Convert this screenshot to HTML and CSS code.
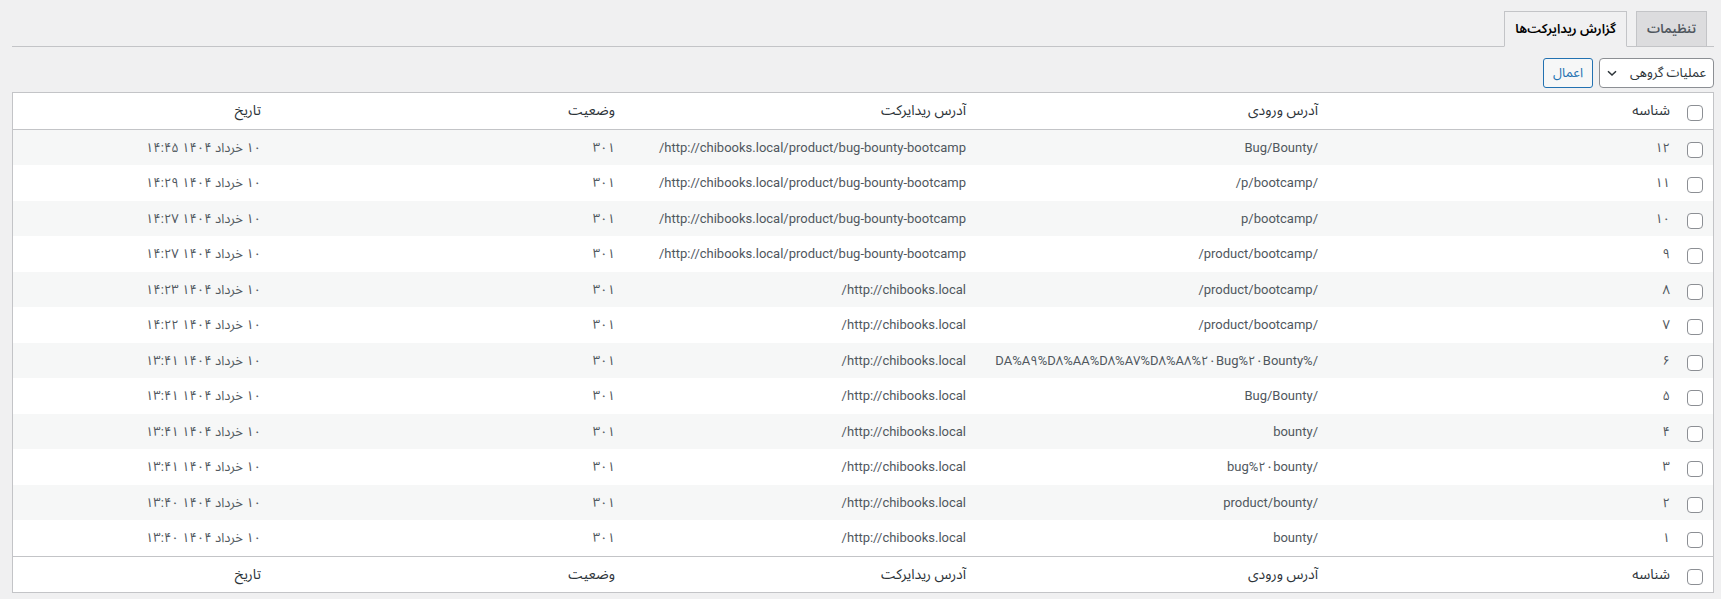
FILE: index.html
```html
<!DOCTYPE html>
<html lang="fa" dir="rtl">
<head>
<meta charset="utf-8">
<title>گزارش ریدایرکت‌ها</title>
<link rel="stylesheet" href="styles.css">
</head>
<body>
<div class="wrap">
  <nav class="tabs">
    <a class="tab">تنظیمات</a>
    <a class="tab tab-active">گزارش ریدایرکت‌ها</a>
  </nav>
  <div class="tablenav">
    <div class="select">
      <span>عملیات گروهی</span>
      <svg class="chev" width="12" height="12" viewBox="0 0 12 12"><path d="M2 4.2 L6 8 L10 4.2" fill="none" stroke="#2c3338" stroke-width="1.5"/></svg>
    </div>
    <button class="btn">اعمال</button>
  </div>
  <table class="list">
    <thead>
      <tr>
        <th class="c-check"><input type="checkbox"></th>
        <th class="c-id">شناسه</th>
        <th class="c-from">آدرس ورودی</th>
        <th class="c-to">آدرس ریدایرکت</th>
        <th class="c-status">وضعیت</th>
        <th class="c-date">تاریخ</th>
      </tr>
    </thead>
    <tbody>
      <tr class="alt"><td class="c-check"><input type="checkbox"></td><td>۱۲</td><td>/Bug/Bounty</td><td>http://chibooks.local/product/bug-bounty-bootcamp/</td><td>۳۰۱</td><td>۱۰ خرداد ۱۴۰۴ ۱۴:۴۵</td></tr>
      <tr><td class="c-check"><input type="checkbox"></td><td>۱۱</td><td>/p/bootcamp/</td><td>http://chibooks.local/product/bug-bounty-bootcamp/</td><td>۳۰۱</td><td>۱۰ خرداد ۱۴۰۴ ۱۴:۲۹</td></tr>
      <tr class="alt"><td class="c-check"><input type="checkbox"></td><td>۱۰</td><td>/p/bootcamp</td><td>http://chibooks.local/product/bug-bounty-bootcamp/</td><td>۳۰۱</td><td>۱۰ خرداد ۱۴۰۴ ۱۴:۲۷</td></tr>
      <tr><td class="c-check"><input type="checkbox"></td><td>۹</td><td>/product/bootcamp/</td><td>http://chibooks.local/product/bug-bounty-bootcamp/</td><td>۳۰۱</td><td>۱۰ خرداد ۱۴۰۴ ۱۴:۲۷</td></tr>
      <tr class="alt"><td class="c-check"><input type="checkbox"></td><td>۸</td><td>/product/bootcamp/</td><td>http://chibooks.local/</td><td>۳۰۱</td><td>۱۰ خرداد ۱۴۰۴ ۱۴:۲۳</td></tr>
      <tr><td class="c-check"><input type="checkbox"></td><td>۷</td><td>/product/bootcamp/</td><td>http://chibooks.local/</td><td>۳۰۱</td><td>۱۰ خرداد ۱۴۰۴ ۱۴:۲۲</td></tr>
      <tr class="alt"><td class="c-check"><input type="checkbox"></td><td>۶</td><td>/%DA%A۹%D۸%AA%D۸%A۷%D۸%A۸%۲۰Bug%۲۰Bounty</td><td>http://chibooks.local/</td><td>۳۰۱</td><td>۱۰ خرداد ۱۴۰۴ ۱۳:۴۱</td></tr>
      <tr><td class="c-check"><input type="checkbox"></td><td>۵</td><td>/Bug/Bounty</td><td>http://chibooks.local/</td><td>۳۰۱</td><td>۱۰ خرداد ۱۴۰۴ ۱۳:۴۱</td></tr>
      <tr class="alt"><td class="c-check"><input type="checkbox"></td><td>۴</td><td>/bounty</td><td>http://chibooks.local/</td><td>۳۰۱</td><td>۱۰ خرداد ۱۴۰۴ ۱۳:۴۱</td></tr>
      <tr><td class="c-check"><input type="checkbox"></td><td>۳</td><td>/bug%۲۰bounty</td><td>http://chibooks.local/</td><td>۳۰۱</td><td>۱۰ خرداد ۱۴۰۴ ۱۳:۴۱</td></tr>
      <tr class="alt"><td class="c-check"><input type="checkbox"></td><td>۲</td><td>/product/bounty</td><td>http://chibooks.local/</td><td>۳۰۱</td><td>۱۰ خرداد ۱۴۰۴ ۱۳:۴۰</td></tr>
      <tr><td class="c-check"><input type="checkbox"></td><td>۱</td><td>/bounty</td><td>http://chibooks.local/</td><td>۳۰۱</td><td>۱۰ خرداد ۱۴۰۴ ۱۳:۴۰</td></tr>
    </tbody>
    <tfoot>
      <tr>
        <th class="c-check"><input type="checkbox"></th>
        <th>شناسه</th>
        <th>آدرس ورودی</th>
        <th>آدرس ریدایرکت</th>
        <th>وضعیت</th>
        <th>تاریخ</th>
      </tr>
    </tfoot>
  </table>
</div>
</body>
</html>
```
FILE: styles.css
```css
html, body {
  margin: 0;
  padding: 0;
  background: #f0f0f1;
}
body {
  font-family: Roboto, "Noto Sans Arabic", Vazirmatn, "DejaVu Sans", sans-serif;
  font-size: 13px;
  color: #3c434a;
}
.wrap {
  padding: 11px 7px 0 12px;
}
.tabs {
  display: flex;
  gap: 9px;
  padding-right: 7px;
  border-bottom: 1px solid #c3c4c7;
}
.tab {
  display: block;
  margin-bottom: -1px;
  padding: 5px 10px;
  font-family: Roboto, "Noto Sans Arabic", "DejaVu Sans Condensed", "DejaVu Sans", sans-serif;
  font-size: 13px;
  line-height: 24px;
  font-weight: 600;
  color: #50575e;
  background: #dcdcde;
  border: 1px solid #c3c4c7;
  white-space: nowrap;
}
.tab-active {
  color: #000;
  background: #f0f0f1;
  border-bottom-color: #f0f0f1;
}
.tablenav {
  display: flex;
  gap: 6px;
  margin-top: 11px;
  height: 30px;
  margin-bottom: 4px;
}
.select {
  box-sizing: border-box;
  min-width: 115px;
  height: 30px;
  display: flex;
  align-items: center;
  justify-content: space-between;
  gap: 6px;
  padding: 0 7px 0 6px;
  font-family: Roboto, "Noto Sans Arabic", "DejaVu Sans Condensed", "DejaVu Sans", sans-serif;
  font-size: 13px;
  white-space: nowrap;
  color: #2c3338;
  background: #fff;
  border: 1px solid #8c8f94;
  border-radius: 4px;
}
.chev {
  display: block;
  flex: none;
}
.btn {
  box-sizing: border-box;
  width: 50px;
  height: 30px;
  padding: 0;
  font-family: inherit;
  font-size: 13px;
  white-space: nowrap;
  color: #2271b1;
  background: #f6f7f7;
  border: 1px solid #2271b1;
  border-radius: 3px;
}
.list {
  width: 100%;
  table-layout: fixed;
  border-spacing: 0;
  background: #fff;
  border: 1px solid #c3c4c7;
}
.list th, .list td {
  text-align: right;
  padding: 8px 10px;
  vertical-align: top;
  white-space: nowrap;
  overflow: hidden;
}
.list th {
  font-size: 14px;
  line-height: 19.6px;
  font-weight: 400;
  color: #2c3338;
}
.list thead th {
  border-bottom: 1px solid #c3c4c7;
}
.list tfoot th {
  border-top: 1px solid #c3c4c7;
}
.list td {
  line-height: 19.5px;
  color: #50575e;
}
.list tr.alt td {
  background: #f6f7f7;
}
.list .c-check {
  width: 33px;
  box-sizing: border-box;
  padding: 12px 10px 0 0;
}
.c-id, .c-from { width: 352px; box-sizing: border-box; }
.c-to { width: 351px; box-sizing: border-box; }
.c-status { width: 354px; box-sizing: border-box; }
input[type="checkbox"] {
  appearance: none;
  -webkit-appearance: none;
  display: block;
  margin: 0;
  width: 16px;
  height: 16px;
  background: #fff;
  border: 1px solid #8c8f94;
  border-radius: 4px;
  box-sizing: border-box;
}
```
